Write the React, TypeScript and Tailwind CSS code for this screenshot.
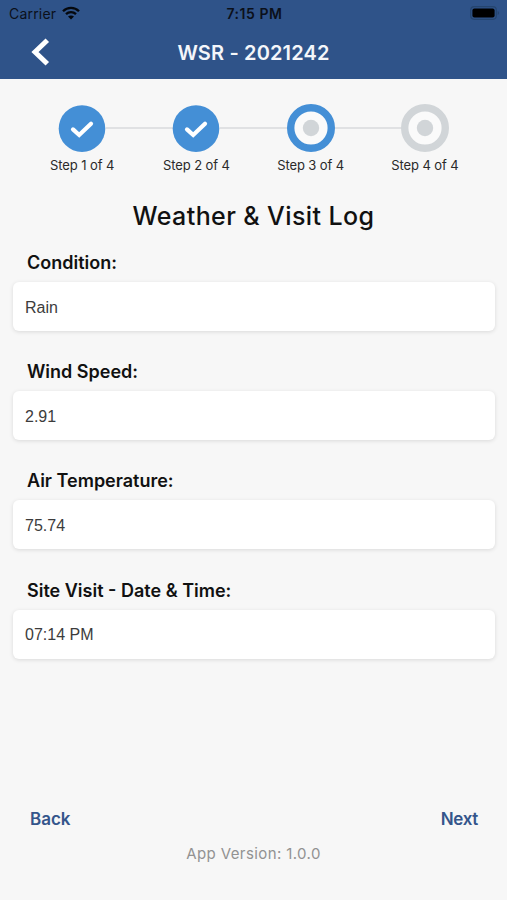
import React, { useState } from "react";

type StepStatus = "done" | "active" | "pending";

interface StepProps {
  label: string;
  status: StepStatus;
  isLast: boolean;
}

interface FieldProps {
  label: string;
  value: string;
  onChangeValue: (value: string) => void;
}

const steps: { label: string; status: StepStatus }[] = [
  { label: "Step 1 of 4", status: "done" },
  { label: "Step 2 of 4", status: "done" },
  { label: "Step 3 of 4", status: "active" },
  { label: "Step 4 of 4", status: "pending" },
];

const StatusBar = () => (
  <div className="grid grid-cols-3 items-center h-[27px] pl-[9px] pr-[7px] text-[14px] leading-[27px] text-[#0b101a]">
    <div className="flex items-center gap-[6px]">
      <span className="tracking-[0.2px]">Carrier</span>
      <svg viewBox="0 0 18 14" className="w-[18px] h-[14px] -mt-[2px]" fill="none">
        <path
          d="M1 5.2C5.5 0.7 12.5 0.7 17 5.2M4 8.2C6.8 5.5 11.2 5.5 14 8.2"
          stroke="#05080d"
          strokeWidth="2.3"
        />
        <path d="M9 13.6L6 10.5C7.6 9 10.4 9 12 10.5Z" fill="#05080d" />
      </svg>
    </div>
    <span className="text-center font-semibold tracking-[0.55px]">7:15 PM</span>
    <svg
      viewBox="0 0 30 14"
      className="w-[30px] h-[14px] -mt-[1px] justify-self-end"
      fill="none"
    >
      <rect x="0.7" y="0.7" width="25.6" height="12.6" rx="3.5" stroke="#25456f" strokeWidth="1.2" />
      <rect x="2.4" y="2.5" width="22.2" height="9" rx="2" fill="#000" />
      <path d="M27.7 5C29.5 5.8 29.5 8.2 27.7 9Z" fill="#25456f" />
    </svg>
  </div>
);

const StepIcon = ({ status }: { status: StepStatus }) => {
  if (status === "done") {
    return (
      <svg viewBox="0 0 48 48" className="w-[48px] h-[48px] shrink-0" fill="none">
        <circle cx="24" cy="24.6" r="23.3" fill="#448fd6" />
        <path
          d="M15 25.4L21.2 31L33 19.8"
          stroke="#fff"
          strokeWidth="4.2"
          strokeLinecap="round"
          strokeLinejoin="miter"
        />
      </svg>
    );
  }

  return (
    <svg viewBox="0 0 48 48" className="w-[48px] h-[48px] shrink-0" fill="none">
      <circle
        cx="24"
        cy="24"
        r="20.3"
        fill="#fafafa"
        stroke={status === "active" ? "#448fd6" : "#d1d5d8"}
        strokeWidth="7.4"
      />
      <circle cx="24" cy="24" r="8.2" fill="#d1d5d8" />
    </svg>
  );
};

const Step: React.FC<StepProps> = ({ label, status, isLast }) => (
  <li className="flex-1 min-w-0 flex flex-col items-center">
    <div className="flex items-center w-full pl-[33px]">
      <StepIcon status={status} />
      {!isLast && <div className="h-[2px] w-[67px] shrink-0 bg-[#e0e1e3]" />}
    </div>
    <span className="mt-[5px] text-[13px] leading-[16px] tracking-[-0.1px] whitespace-nowrap text-[#2a2a2a]">
      {label}
    </span>
  </li>
);

const Field: React.FC<FieldProps> = ({ label, value, onChangeValue }) => (
  <label className="block h-[109.2px]">
    <span className="block pl-[14px] h-[32px] text-[18px] leading-[26px] font-semibold text-[#111]">
      {label}
    </span>
    <input
      className="block w-full h-[49px] px-[12px] pt-[2px] rounded-[6px] bg-white shadow-[0_1px_4px_rgba(0,0,0,0.12)] font-['Liberation_Sans',sans-serif] text-[16px] text-[#3c3c3c] outline-none"
      value={value}
      onChange={(e) => onChangeValue(e.target.value)}
    />
  </label>
);

export default function App() {
  const [condition, setCondition] = useState("Rain");
  const [windSpeed, setWindSpeed] = useState("2.91");
  const [temperature, setTemperature] = useState("75.74");
  const [visitTime, setVisitTime] = useState("07:14 PM");

  return (
    <div className="flex flex-col w-[507px] h-[900px] overflow-hidden bg-[#f7f7f7] font-['Inter',sans-serif]">
      <header className="h-[79px] shrink-0 bg-[#2f5389]">
        <StatusBar />
        <div className="grid grid-cols-[80px_1fr_80px] items-center h-[50px]">
          <button className="pl-[31px]" aria-label="Go back">
            <svg viewBox="0 0 19 28" className="w-[19px] h-[28px]" fill="none">
              <path d="M16.3 2.2L4 14L16.3 25.8" stroke="#fff" strokeWidth="5" />
            </svg>
          </button>
          <h1 className="pt-px text-center text-[20px] font-semibold tracking-[0.15px] text-[#f4f6fa]">
            WSR - 2021242
          </h1>
        </div>
      </header>

      <ol className="flex px-[25px] pt-[25px] shrink-0">
        {steps.map((step, index) => (
          <Step key={step.label} {...step} isLast={index === steps.length - 1} />
        ))}
      </ol>

      <h2 className="mt-[27px] h-[32px] shrink-0 text-center text-[25px] leading-[32px] font-medium tracking-[0.4px] text-[#111]">
        Weather &amp; Visit Log
      </h2>

      <form className="mt-[18px] pl-[13px] pr-[12px] shrink-0">
        <Field label="Condition:" value={condition} onChangeValue={setCondition} />
        <Field label="Wind Speed:" value={windSpeed} onChangeValue={setWindSpeed} />
        <Field label="Air Temperature:" value={temperature} onChangeValue={setTemperature} />
        <Field label="Site Visit - Date & Time:" value={visitTime} onChangeValue={setVisitTime} />
      </form>

      <footer className="mt-auto pb-[35px]">
        <div className="flex justify-between pl-[30px] pr-[29px] text-[17px] leading-[24px] font-semibold text-[#34558b]">
          <button className="pt-px">Back</button>
          <button className="pt-px tracking-[-0.3px]">Next</button>
        </div>
        <p className="mt-[12px] text-center text-[15px] leading-[22px] tracking-[0.4px] text-[#929292]">
          App Version: 1.0.0
        </p>
      </footer>
    </div>
  );
}
